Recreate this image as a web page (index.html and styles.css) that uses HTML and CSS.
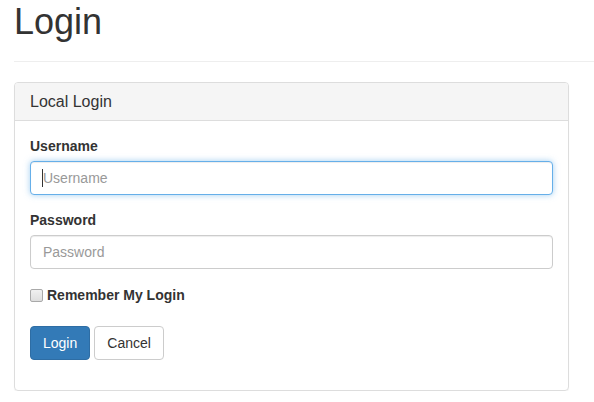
FILE: index.html
```html
<!DOCTYPE html>
<html>
<head>
<meta charset="utf-8">
<link rel="stylesheet" href="styles.css">
</head>
<body>
<div class="container">
  <div class="page-header">
    <h1>Login</h1>
  </div>
  <div class="panel">
    <div class="panel-heading">Local Login</div>
    <div class="panel-body">
      <form>
        <div class="form-group">
          <label class="control-label">Username</label>
          <div class="input-wrap">
            <input class="form-control focused" type="text" placeholder="Username">
            <span class="caret"></span>
          </div>
        </div>
        <div class="form-group">
          <label class="control-label">Password</label>
          <input class="form-control" type="password" placeholder="Password">
        </div>
        <div class="checkbox">
          <label><input type="checkbox"><span>Remember My Login</span></label>
        </div>
        <div class="buttons">
          <button type="button" class="btn btn-primary">Login</button>
          <button type="button" class="btn btn-default">Cancel</button>
        </div>
      </form>
    </div>
  </div>
</div>
</body>
</html>
```

FILE: styles.css
```css
* { box-sizing: border-box; }
html, body { margin: 0; padding: 0; background: #fff; }
body {
  font-family: "Liberation Sans", Arial, sans-serif;
  font-size: 14px;
  line-height: 20px;
  color: #333;
}
.container { padding: 0 0 0 14px; }
.page-header {
  border-bottom: 1px solid #eee;
  padding-bottom: 19px;
  margin-bottom: 20px;
}
.page-header h1 {
  margin: 0;
  padding-top: 2px;
  font-size: 36px;
  line-height: 40px;
  font-weight: 500;
  color: #333;
}
.panel {
  width: 555px;
  border: 1px solid #ddd;
  border-radius: 4px;
  box-shadow: 0 1px 1px rgba(0,0,0,0.05);
}
.panel-heading {
  background: #f5f5f5;
  border-bottom: 1px solid #ddd;
  border-radius: 3px 3px 0 0;
  padding: 9px 15px 8px;
  font-size: 16px;
  line-height: 20px;
}
.panel-body { padding: 15px 15px 15px; }
.form-group { margin-bottom: 15px; }
.control-label {
  display: block;
  font-weight: bold;
  margin-bottom: 5px;
}
.input-wrap { position: relative; }
.form-control {
  display: block;
  width: 523px;
  height: 34px;
  padding: 6px 12px;
  font-family: inherit;
  font-size: 14px;
  line-height: 20px;
  color: #555;
  background: #fff;
  border: 1px solid #ccc;
  border-radius: 4px;
  box-shadow: inset 0 1px 1px rgba(0,0,0,0.075);
  outline: none;
}
.form-control::placeholder { color: #999; }
.form-control.focused {
  border-color: #66afe9;
  box-shadow: inset 0 1px 1px rgba(0,0,0,0.075), 0 0 6px rgba(102,175,233,0.6);
}
.caret {
  position: absolute;
  left: 12px;
  top: 8px;
  width: 1px;
  height: 18px;
  background: #333;
}
.checkbox { margin: 0 0 20px; }
.checkbox label {
  display: flex;
  align-items: center;
  font-weight: bold;
  height: 22px;
}
.checkbox input {
  -webkit-appearance: none;
  appearance: none;
  margin: 0 4px 0 0;
  width: 13px;
  height: 13px;
  border: 1px solid #a9a9a9;
  border-radius: 2px;
  background: linear-gradient(#f0f0f0, #dedede);
}
.buttons { margin-bottom: 15px; display: flex; gap: 4px; }
.btn {
  height: 34px;
  padding: 6px 12px;
  font-family: inherit;
  font-size: 14px;
  line-height: 20px;
  border: 1px solid transparent;
  border-radius: 4px;
  cursor: pointer;
}
.btn-primary { background: #337ab7; border-color: #2e6da4; color: #fff; }
.btn-default { background: #fff; border-color: #ccc; color: #333; }
```
